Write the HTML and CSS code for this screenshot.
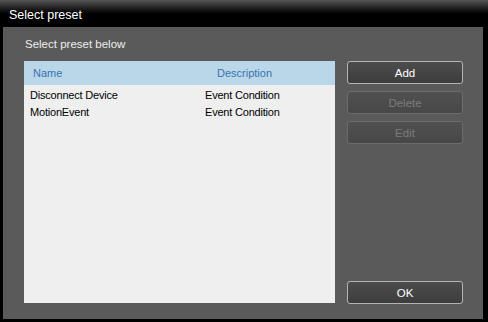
FILE: index.html
```html
<!DOCTYPE html>
<html lang="en">
<head>
    <meta charset="UTF-8">
    <title>Select preset</title>
    <link rel="stylesheet" href="styles.css">
</head>
<body>
<div class="dialog">
    <div class="title-bar">Select preset</div>

    <div class="dialog-body">
        <div class="caption">Select preset below</div>

        <div class="main">
            <div class="preset-list">
                <div class="list-row list-header">
                    <span class="col-name">Name</span>
                    <span class="col-desc">Description</span>
                </div>
                <div class="list-row">
                    <span class="col-name">Disconnect Device</span>
                    <span class="col-desc">Event Condition</span>
                </div>
                <div class="list-row">
                    <span class="col-name">MotionEvent</span>
                    <span class="col-desc">Event Condition</span>
                </div>
            </div>

            <div class="actions">
                <button type="button" class="btn">Add</button>
                <button type="button" class="btn" disabled>Delete</button>
                <button type="button" class="btn" disabled>Edit</button>
                <button type="button" class="btn btn-ok">OK</button>
            </div>
        </div>
    </div>
</div>
</body>
</html>
```

FILE: styles.css
```css
html, body {
    margin: 0;
    padding: 0;
    background: #000;
}

body {
    width: 488px;
    height: 322px;
    overflow: hidden;
    font-family: "Liberation Sans", Arial, sans-serif;
    font-size: 12px;
}

.dialog {
    display: flex;
    flex-direction: column;
    height: 100%;
}

/* Title bar */
.title-bar {
    height: 27px;
    line-height: 31px;
    padding-left: 9px;
    color: #fff;
    font-size: 12.5px;
    background: linear-gradient(#555 0, #1a1a1a 9px, #000 14px, #000 100%);
}

.dialog-body {
    margin: 0 5px 3px 3px;
    height: 292px;
    background-color: #5a5a5a;
    padding: 10px 20px 0 21px;
    box-sizing: border-box;
}

.caption {
    color: #eee;
    height: 24px;
    line-height: 14px;
    padding-left: 1px;
    font-size: 11.5px;
}

.main {
    display: flex;
    gap: 12px;
}

/* Preset list */
.preset-list {
    width: 311px;
    height: 242px;
    background-color: #efefef;
}

.list-row {
    display: flex;
    height: 17px;
    line-height: 18px;
    color: #000;
    font-size: 11px;
    letter-spacing: -0.2px;
}

.list-header {
    height: 24px;
    line-height: 24px;
    margin-bottom: 1px;
    background-color: #b9d7e8;
    color: #3b72ad;
    letter-spacing: 0;
}

.col-name {
    width: 175px;
    padding-left: 6px;
    box-sizing: border-box;
}

.col-desc {
    width: 120px;
    padding-left: 6px;
    box-sizing: border-box;
}

.list-header .col-name {
    padding-left: 9px;
}

.list-header .col-desc {
    padding-left: 18px;
}

/* Buttons */
.actions {
    width: 116px;
    display: flex;
    flex-direction: column;
    gap: 7px;
}

.btn {
    height: 23px;
    padding: 0;
    border: 1px solid #b4b4b4;
    border-radius: 3px;
    background: linear-gradient(#4c4c4c, #3d3d3d);
    color: #fff;
    font-family: "Liberation Sans", Arial, sans-serif;
    font-size: 11.5px;
}

.btn:disabled {
    border-color: #6c6c6c;
    background: linear-gradient(#515151, #474747);
    color: #7c7c7c;
}

.btn-ok {
    margin-top: auto;
    margin-bottom: -1px;
}
```
